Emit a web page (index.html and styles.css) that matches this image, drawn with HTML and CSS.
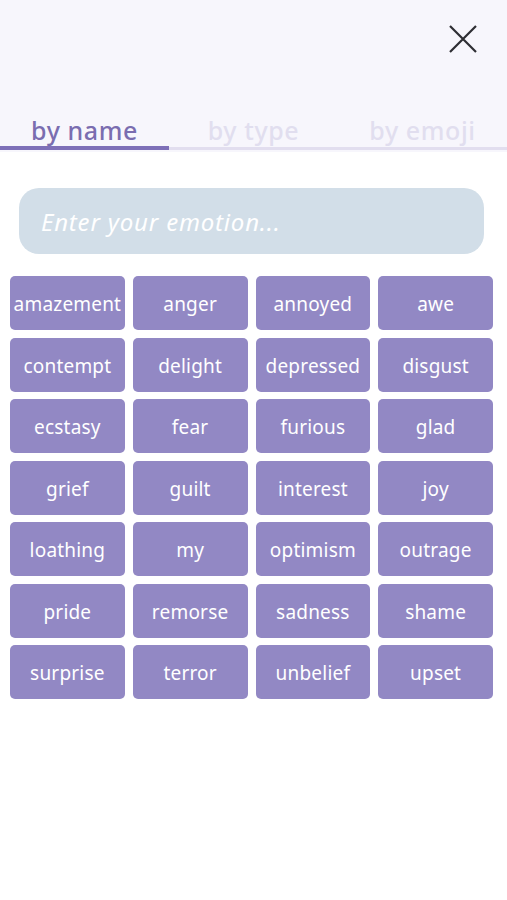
FILE: index.html
```html
<!DOCTYPE html>
<html lang="en">
<head>
  <meta charset="UTF-8" />
  <meta name="viewport" content="width=device-width, initial-scale=1.0"/>
  <title>Pick an emotion</title>
  <link rel="stylesheet" href="styles.css">
</head>
<body>
  <div class="header">
    <div class="topbar">
      <button class="close" aria-label="Close">
        <svg width="28" height="28" viewBox="0 0 28 28">
          <path d="M1 1 L27 27 M27 1 L1 27" stroke="#2e2e33" stroke-width="2.2" fill="none"/>
        </svg>
      </button>
    </div>
    <div class="tabs">
      <div class="tab active">by name</div>
      <div class="tab">by type</div>
      <div class="tab">by emoji</div>
    </div>
  </div>

  <div class="search">
    <input type="text" placeholder="Enter your emotion...">
  </div>

  <div class="grid" id="emotionGrid"></div>

  <script>
    const emotions = [
      'amazement', 'anger', 'annoyed', 'awe',
      'contempt', 'delight', 'depressed', 'disgust',
      'ecstasy', 'fear', 'furious', 'glad',
      'grief', 'guilt', 'interest', 'joy',
      'loathing', 'my', 'optimism', 'outrage',
      'pride', 'remorse', 'sadness', 'shame',
      'surprise', 'terror', 'unbelief', 'upset'
    ];
    const grid = document.getElementById('emotionGrid');
    emotions.forEach(name => {
      const btn = document.createElement('button');
      btn.className = 'emotion';
      btn.textContent = name;
      grid.appendChild(btn);
    });
  </script>
</body>
</html>
```

FILE: styles.css
```css
body {
  margin: 0;
  background: #fff;
  font-family: "Noto Sans", Lato, sans-serif;
}
.header {
  background: #f7f6fc;
  height: 152px;
  display: flex;
  flex-direction: column;
  justify-content: space-between;
}
.topbar {
  display: flex;
  justify-content: flex-end;
  padding: 25px 30px 0 0;
}
.close {
  background: none;
  border: none;
  padding: 0;
  width: 28px;
  height: 28px;
  cursor: pointer;
}
.tabs {
  display: grid;
  grid-template-columns: repeat(3, 1fr);
  border-bottom: 3px solid #e2deef;
  margin-bottom: 2px;
}
.tab {
  text-align: center;
  font-size: 25px;
  font-weight: 500;
  letter-spacing: 0.6px;
  color: #e1deef;
  line-height: 32px;
  margin-bottom: -3px;
  border-bottom: 4px solid transparent;
}
.tab.active {
  color: #7a6db0;
  border-bottom-color: #7e70b8;
}
.search {
  padding: 36px 23px 22px 19px;
}
.search input {
  width: 100%;
  box-sizing: border-box;
  height: 66px;
  border: none;
  border-radius: 20px;
  background: #d2dee8;
  padding: 0 22px;
  font-family: inherit;
  font-size: 24px;
  letter-spacing: 0.8px;
  font-style: italic;
  color: #555;
}
.search input::placeholder {
  color: #fff;
}
.grid {
  display: grid;
  grid-template-columns: repeat(4, 1fr);
  gap: 7.5px 8px;
  margin: 0 14px 0 10px;
}
.emotion {
  height: 54px;
  border: none;
  border-radius: 5px;
  background: #9288c4;
  color: #fff;
  font-family: inherit;
  font-size: 19px;
  letter-spacing: 0.2px;
  padding: 2px 0 0;
}
```
